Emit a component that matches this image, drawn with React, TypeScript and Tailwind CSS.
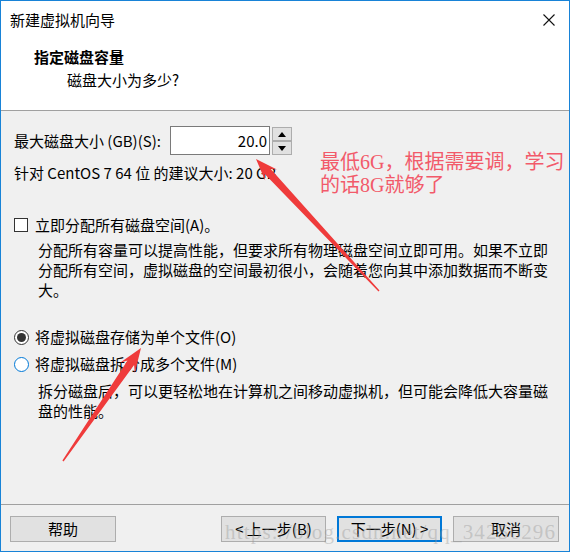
import React from "react";

const Spin = ({ up }: { up?: boolean }) => (
  <div className="h-[14px] w-[20px] border border-[#adadad] bg-[#e1e1e1] flex items-center justify-center">
    <svg width="8" height="5" viewBox="0 0 8 5">
      {up ? <polygon points="0,5 8,5 4,0" fill="#000" /> : <polygon points="0,0 8,0 4,5" fill="#000" />}
    </svg>
  </div>
);

const Btn = ({ label, main, w }: { label: string; main?: boolean; w: string }) => (
  <div
    className={`${w} h-[26px] bg-[#e1e1e1] flex items-center justify-center text-[15px] leading-[20px] ${
      main ? "border-2 border-[#0078d7]" : "border border-[#adadad]"
    }`}
  >
    {label}
  </div>
);

export default function App() {
  return (
    <div className="relative w-[570px] h-[552px] bg-[#f0f0f0] border border-[#1883d7] flex flex-col overflow-hidden text-black font-['Noto_Sans_CJK_SC',sans-serif]">
      {/* title bar */}
      <div className="h-[38px] bg-white flex items-center justify-between pl-[9px] pr-[14px]">
        <span className="text-[15px] leading-[20px]">新建虚拟机向导</span>
        <svg width="12" height="12" viewBox="0 0 12 12">
          <path d="M0.5 0.5 L11.5 11.5 M11.5 0.5 L0.5 11.5" stroke="#111" strokeWidth="1.1" />
        </svg>
      </div>

      {/* header */}
      <div className="h-[71px] bg-white pl-[33px] pt-[8px]">
        <div className="text-[15px] leading-[20px] font-bold">指定磁盘容量</div>
        <div className="text-[15px] leading-[20px] mt-[3px] ml-[33px]">磁盘大小为多少?</div>
      </div>
      <div className="h-px bg-[#a0a0a0]" />

      {/* body */}
      <div className="flex-1 pl-[13px] text-[15px] leading-[20px]">
        <div className="mt-[15px] h-[29px] flex items-center">
          <span className="w-[156px]">最大磁盘大小 (GB)(S):</span>
          <div className="w-[100px] h-[29px] border border-[#7a7a7a] bg-white flex items-center justify-end pr-[2px]">
            20.0
          </div>
          <div className="ml-[2px] self-start mt-px flex flex-col">
            <Spin up />
            <Spin />
          </div>
        </div>

        <div className="mt-[8px]">针对 CentOS 7 64 位 的建议大小: 20 GB</div>

        <div className="mt-[32px] flex items-center">
          <div className="w-[14px] h-[14px] border border-[#333] bg-white" />
          <span className="ml-[7px]">立即分配所有磁盘空间(A)。</span>
        </div>
        <div className="mt-[5px] pl-[24px] whitespace-nowrap">
          分配所有容量可以提高性能，但要求所有物理磁盘空间立即可用。如果不立即
          <br />
          分配所有空间，虚拟磁盘的空间最初很小，会随着您向其中添加数据而不断变
          <br />
          大。
        </div>

        <div className="mt-[27px] flex items-center">
          <div className="w-[15px] h-[15px] rounded-full border border-[#333] bg-white flex items-center justify-center">
            <div className="w-[9px] h-[9px] rounded-full bg-[#333]" />
          </div>
          <span className="ml-[6px]">将虚拟磁盘存储为单个文件(O)</span>
        </div>
        <div className="mt-[7px] flex items-center">
          <div className="w-[15px] h-[15px] rounded-full border border-[#0078d7] bg-white" />
          <span className="ml-[6px]">将虚拟磁盘拆分成多个文件(M)</span>
        </div>
        <div className="mt-[7px] pl-[24px] whitespace-nowrap">
          拆分磁盘后，可以更轻松地在计算机之间移动虚拟机，但可能会降低大容量磁
          <br />
          盘的性能。
        </div>
      </div>

      {/* footer */}
      <div className="h-px bg-[#a0a0a0]" />
      <div className="h-[46px] pt-[11px] pl-[9px] pr-[10px] flex items-start justify-between">
        <Btn label="帮助" w="w-[106px]" />
        <div className="flex gap-[11px]">
          <Btn label="< 上一步(B)" w="w-[105px]" />
          <Btn label="下一步(N) >" w="w-[105px]" main />
          <Btn label="取消" w="w-[106px]" />
        </div>
      </div>

      {/* watermark */}
      <div className="absolute left-[224px] top-[519px] pointer-events-none whitespace-nowrap text-[21px] leading-[24px] tracking-[1.2px] text-[rgba(150,150,150,0.4)] font-['Liberation_Serif',serif]">
        https://blog.csdn.net/qq_34256296
      </div>

      {/* annotation */}
      <div className="absolute left-[319px] top-[150px] whitespace-nowrap text-[20px] leading-[23px] text-[#f25a6a] font-['Liberation_Serif','Noto_Sans_CJK_SC',serif]">
        最低6G，根据需要调，学习
        <br />
        的话8G就够了
      </div>

      <svg className="absolute left-0 top-0 pointer-events-none" width="570" height="552" viewBox="0 0 570 552">
        <polygon
          points="255,158 275.9,168.6 269.5,167.7 378.5,289.5 377.5,290.5 263.7,173.1 264.1,179.5"
          fill="#ef3b3b"
        />
        <polygon
          points="140,347 133.8,371.9 133.1,364.1 62.6,460.4 61.4,459.6 126.5,359.5 119.0,361.7"
          fill="#ef3b3b"
        />
      </svg>
    </div>
  );
}
